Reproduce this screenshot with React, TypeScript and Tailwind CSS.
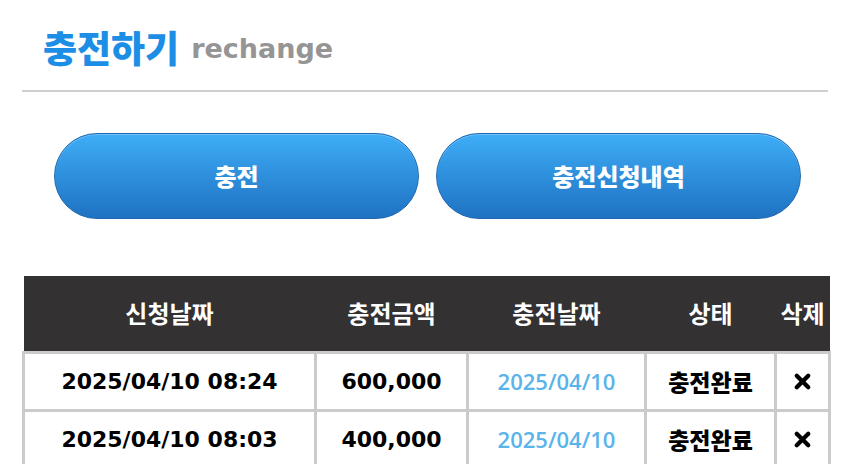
import { X } from 'lucide-react';

const ROWS = [
  { requested: '2025/04/10 08:24', amount: '600,000', charged: '2025/04/10', status: '충전완료' },
  { requested: '2025/04/10 08:03', amount: '400,000', charged: '2025/04/10', status: '충전완료' },
];

const KR = "font-['Noto_Sans_CJK_KR','Noto_Sans',sans-serif]";
const NUM = "font-['DejaVu_Sans','Noto_Sans',sans-serif]";

export default function App() {
  return (
    <div className={`w-[850px] h-[464px] overflow-hidden bg-white ${KR}`}>
      <div className="px-[22px]">
        {/* Title */}
        <div className="flex items-end gap-[12px] pl-[21px] pt-[18px] h-[70px]">
          <h1 className="text-[37px] leading-[46px] font-black text-[#1c8ee6]">충전하기</h1>
          <span className={`text-[27px] leading-[42px] font-bold text-[#959595] ${NUM}`}>rechange</span>
        </div>
        <div className="mt-[20px] h-[2px] bg-[#cfcfcf]" />

        {/* Buttons */}
        <div className="flex gap-[17px] pl-[32px] pt-[41px]">
          {['충전', '충전신청내역'].map((label) => (
            <button
              key={label}
              className="w-[365px] h-[86px] rounded-full border border-[#1f67ae] bg-gradient-to-b from-[#3fadf7] to-[#1f72c2] text-white text-[24px] font-black shadow-[inset_0_1px_0_rgba(255,255,255,0.25)]"
            >
              {label}
            </button>
          ))}
        </div>

        {/* Table */}
        <table className="mt-[57px] w-[806px] table-fixed border-collapse">
          <colgroup>
            <col className="w-[292px]" />
            <col className="w-[152px]" />
            <col className="w-[178px]" />
            <col className="w-[130px]" />
            <col className="w-[54px]" />
          </colgroup>
          <thead>
            <tr className="bg-[#333132] text-white text-[24px] font-black h-[76px]">
              <th>신청날짜</th>
              <th>충전금액</th>
              <th>충전날짜</th>
              <th>상태</th>
              <th>삭제</th>
            </tr>
          </thead>
          <tbody>
            {ROWS.map((r) => (
              <tr key={r.requested} className="h-[58px] text-center">
                <td className={`border-[3px] border-[#cbcbcb] text-[22px] font-bold text-black ${NUM}`}>
                  {r.requested}
                </td>
                <td className={`border-[3px] border-[#cbcbcb] text-[22px] font-bold text-black ${NUM}`}>
                  {r.amount}
                </td>
                <td className="border-[3px] border-[#cbcbcb] text-[22px] font-semibold text-[#5ab4ea] font-['Open_Sans','Noto_Sans',sans-serif]">
                  {r.charged}
                </td>
                <td className="border-[3px] border-[#cbcbcb] text-[23px] font-black text-black">{r.status}</td>
                <td className="border-[3px] border-[#cbcbcb]">
                  <X size={23} strokeWidth={4.5} className="mx-auto text-black" />
                </td>
              </tr>
            ))}
          </tbody>
        </table>
      </div>
    </div>
  );
}
